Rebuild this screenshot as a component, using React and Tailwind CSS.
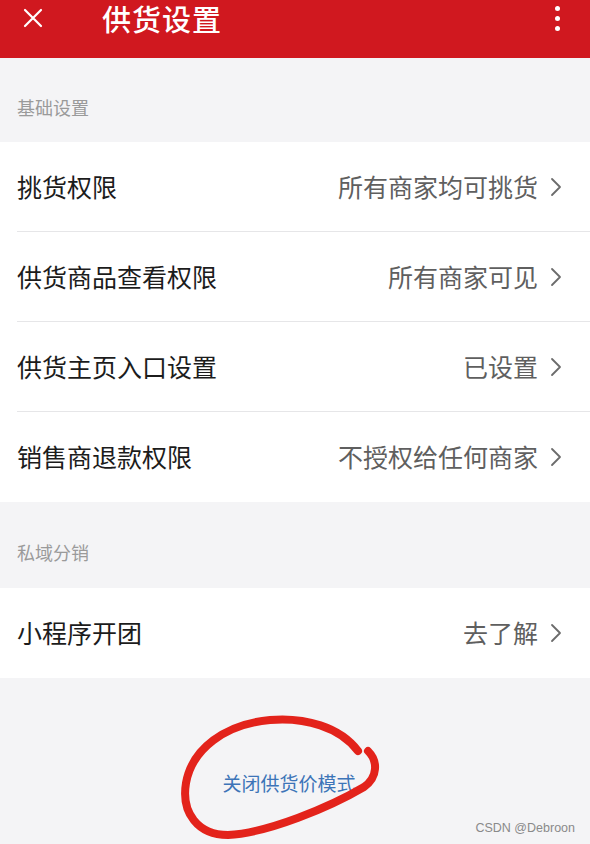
import React from 'react';

const cjk = { fontFamily: '"Noto Sans CJK SC", "Noto Sans", sans-serif' };

function Chevron() {
  return (
    <svg width="12" height="20" viewBox="0 0 12 20" className="ml-[12px] shrink-0">
      <path d="M2 2 L10 10 L2 18" fill="none" stroke="#6b6b6b" strokeWidth="1.8" strokeLinejoin="round" strokeLinecap="round" />
    </svg>
  );
}

function Row({ label, value, last }) {
  return (
    <div className="relative h-[90px] flex items-center pl-[17px] pr-[28px] bg-white">
      <span className="text-[25px] text-[#1c1c1c] flex-1">{label}</span>
      <span className="text-[25px] text-[#5f5f5f]">{value}</span>
      <Chevron />
      {!last && <div className="absolute left-[17px] right-0 bottom-0 h-px bg-[#e6e6e8]" />}
    </div>
  );
}

function SectionLabel({ children, h }) {
  return (
    <div className={`${h} flex items-center pt-[14px] pl-[17px] text-[18px] text-[#9a9a9a]`}>{children}</div>
  );
}

export default function App() {
  return (
    <div className="w-[590px] h-[844px] bg-[#f4f4f6] overflow-hidden flex flex-col" style={cjk}>
      <div className="h-[58px] bg-[#d0181f] shrink-0">
        <div className="h-[36px] flex items-center px-[22px]">
          <svg width="22" height="22" viewBox="0 0 22 22">
            <path d="M3 3 L19 19 M19 3 L3 19" stroke="#fff" strokeWidth="2.2" strokeLinecap="round" />
          </svg>
          <span className="ml-[58px] text-[29px] leading-[30px] font-medium text-white tracking-[1px]">供货设置</span>
          <div className="ml-auto mr-[8px] flex flex-col gap-[5px]">
            <span className="w-[5px] h-[5px] rounded-full bg-white" />
            <span className="w-[5px] h-[5px] rounded-full bg-white" />
            <span className="w-[5px] h-[5px] rounded-full bg-white" />
          </div>
        </div>
      </div>

      <SectionLabel h="h-[84px]">基础设置</SectionLabel>
      <div className="flex flex-col">
        <Row label="挑货权限" value="所有商家均可挑货" />
        <Row label="供货商品查看权限" value="所有商家可见" />
        <Row label="供货主页入口设置" value="已设置" />
        <Row label="销售商退款权限" value="不授权给任何商家" last />
      </div>

      <SectionLabel h="h-[86px]">私域分销</SectionLabel>
      <Row label="小程序开团" value="去了解" last />

      <div className="relative flex-1">
        <div className="pt-[91px] pr-[12px] text-center text-[19px] text-[#3d74b8]">关闭供货价模式</div>
        <svg className="absolute left-0 top-0" width="590" height="167" viewBox="0 677 590 167">
          <path
            d="M358 750 C 340 726, 305 716, 270 719 C 225 723, 192 748, 186 782 C 181 812, 198 834, 228 834 C 268 832, 330 806, 364 786 C 378 776, 378 760, 368 750"
            fill="none"
            stroke="#e3231b"
            strokeWidth="8"
            strokeLinecap="round"
          />
        </svg>
        <div className="absolute right-[15px] bottom-[6px] text-[12.5px] text-[#8a8a8a]" style={{ fontFamily: '"Liberation Sans", sans-serif' }}>
          CSDN @Debroon
        </div>
      </div>
    </div>
  );
}
